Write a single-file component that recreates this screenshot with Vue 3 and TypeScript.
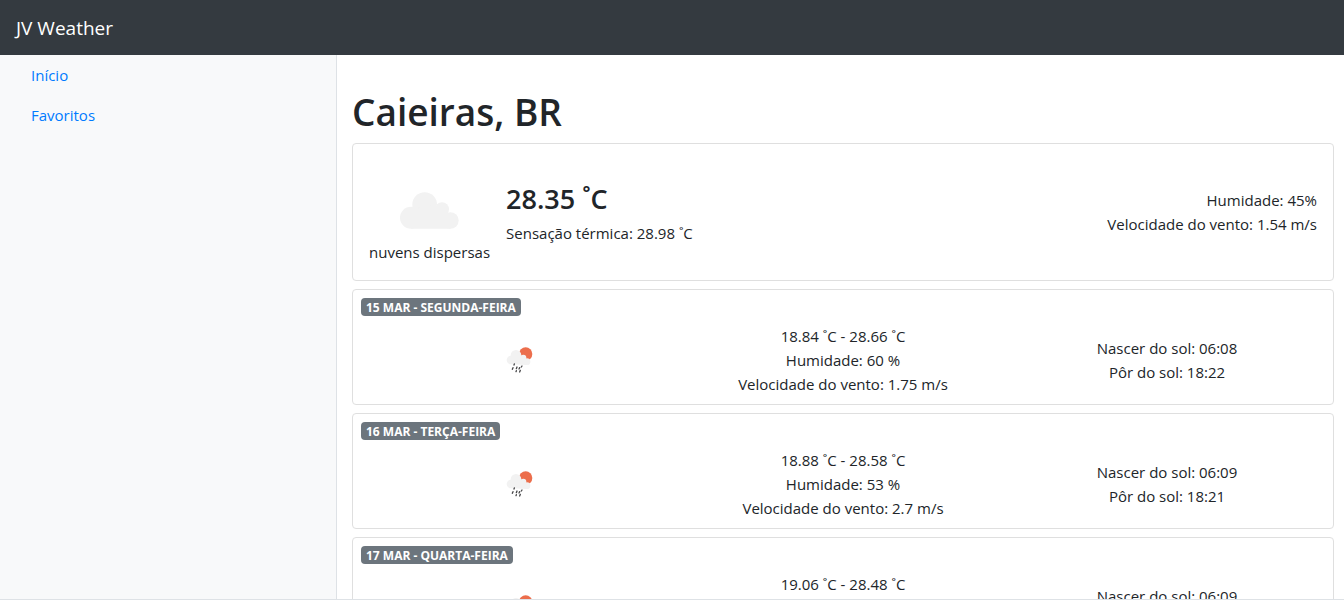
<script setup lang="ts">
interface DayForecast {
  label: string
  min: string
  max: string
  humidity: number
  wind: string
  sunrise: string
  sunset: string
}

const city = 'Caieiras, BR'

const current = {
  temp: '28.35',
  feelsLike: '28.98',
  description: 'nuvens dispersas',
  humidity: 45,
  wind: '1.54',
}

const days: DayForecast[] = [
  { label: '15 MAR - SEGUNDA-FEIRA', min: '18.84', max: '28.66', humidity: 60, wind: '1.75', sunrise: '06:08', sunset: '18:22' },
  { label: '16 MAR - TERÇA-FEIRA', min: '18.88', max: '28.58', humidity: 53, wind: '2.7', sunrise: '06:09', sunset: '18:21' },
  { label: '17 MAR - QUARTA-FEIRA', min: '19.06', max: '28.48', humidity: 55, wind: '2.1', sunrise: '06:09', sunset: '18:20' },
]
</script>

<template>
  <div class="shell">
    <header class="navbar">
      <a class="brand" href="#">JV Weather</a>
    </header>
    <div class="body">
      <nav class="sidebar">
        <a class="nav-link" href="#">Início</a>
        <a class="nav-link" href="#favoritos">Favoritos</a>
      </nav>
      <main class="content">
        <h1>{{ city }}</h1>
        <section class="card current">
          <div class="condition">
            <svg class="cloud" viewBox="0 0 177 110" aria-hidden="true">
              <g fill="#f2f2f2">
                <circle cx="74" cy="37" r="37" />
                <circle cx="33" cy="77" r="33" />
                <circle cx="126" cy="51" r="21" />
                <circle cx="151" cy="85" r="25" />
                <path d="M33 110V60L74 37L126 45L151 75V110Z" />
              </g>
            </svg>
            <span>{{ current.description }}</span>
          </div>
          <div class="temperature">
            <h2>{{ current.temp }} ˚C</h2>
            <p>Sensação térmica: {{ current.feelsLike }} ˚C</p>
          </div>
          <div class="details">
            <p>Humidade: {{ current.humidity }}%</p>
            <p>Velocidade do vento: {{ current.wind }} m/s</p>
          </div>
        </section>
        <section v-for="day in days" :key="day.label" class="card day">
          <span class="badge">{{ day.label }}</span>
          <div class="row">
            <div>
              <svg class="rain" viewBox="0 0 150 150" aria-hidden="true">
                <circle cx="95" cy="57" r="20" fill="#ec6e4c" />
                <g fill="#f2f2f2">
                  <circle cx="66" cy="61" r="16" />
                  <circle cx="51" cy="75" r="13" />
                  <circle cx="88" cy="68" r="9" />
                  <circle cx="99" cy="80" r="10" />
                  <path d="M51 88V70L66 58L88 66L99 76V90Z" />
                </g>
                <path
                  d="M61 87L60 90M57 98L55 103M69 96L67 101M84 93L82 96M77 98L75 102M67 107L66 110M79 106L77 111"
                  fill="none"
                  stroke="#48484a"
                  stroke-width="4"
                  stroke-linecap="round"
                />
              </svg>
            </div>
            <div>
              <p>{{ day.min }} ˚C - {{ day.max }} ˚C</p>
              <p>Humidade: {{ day.humidity }} %</p>
              <p>Velocidade do vento: {{ day.wind }} m/s</p>
            </div>
            <div>
              <p>Nascer do sol: {{ day.sunrise }}</p>
              <p>Pôr do sol: {{ day.sunset }}</p>
            </div>
          </div>
        </section>
      </main>
    </div>
  </div>
</template>

<style>
body {
  margin: 0;
  background: #fff;
}
</style>

<style scoped>
.shell {
  box-sizing: border-box;
  display: flex;
  flex-direction: column;
  height: calc(100vh - 2px);
  border-bottom: 1px solid #dee2e6;
  color: #212529;
  font-family: "Segoe UI", "Open Sans", "Noto Sans", sans-serif;
  font-size: 15px;
  line-height: 24px;
}
h1,
h2,
p {
  margin: 0;
}
.navbar {
  flex: none;
  padding: 13px 16px 12px;
  background: #343a40;
}
.brand {
  display: block;
  color: #fff;
  font-size: 19px;
  line-height: 30px;
  text-decoration: none;
}
.body {
  display: flex;
  flex: 1;
  min-height: 0;
}
.sidebar {
  box-sizing: border-box;
  flex: none;
  width: calc(25% + 1px);
  padding: 0 15px;
  background: #f8f9fa;
  border-right: 1px solid #dee2e6;
}
.nav-link {
  display: block;
  padding: 8px 16px;
  color: #007bff;
  text-decoration: none;
}
.content {
  flex: 1;
  min-width: 0;
  overflow: hidden;
  padding: 33px 10px 0 15px;
}
h1 {
  margin-bottom: 7px;
  font-size: 37px;
  font-weight: 600;
  line-height: 48px;
}
.card {
  box-sizing: border-box;
  margin-bottom: 8px;
  border: 1px solid #dfdfdf;
  border-radius: 4px;
}
.current {
  display: flex;
  align-items: center;
  gap: 16px;
  min-height: 138px;
  padding: 16px;
}
.condition {
  display: flex;
  flex-direction: column;
  align-items: center;
  gap: 11px;
  padding-top: 32px;
}
.cloud {
  display: block;
  width: 59px;
  height: 37px;
}
h2 {
  margin-bottom: 4px;
  padding-top: 2px;
  font-size: 27px;
  font-weight: 600;
  line-height: 36px;
}
.details {
  margin-left: auto;
  text-align: right;
}
.day {
  padding: 8px 4px;
}
.badge {
  display: block;
  width: fit-content;
  margin: 0 4px 8px;
  padding: 1px 5px 0;
  border-radius: 4px;
  background: #6c757d;
  color: #fff;
  font-size: 12px;
  font-weight: 700;
  line-height: 17px;
}
.row {
  display: grid;
  grid-template-columns: repeat(3, 1fr);
  align-items: center;
  text-align: center;
}
.rain {
  display: block;
  width: 50px;
  height: 50px;
  margin: 0 auto;
}
</style>
